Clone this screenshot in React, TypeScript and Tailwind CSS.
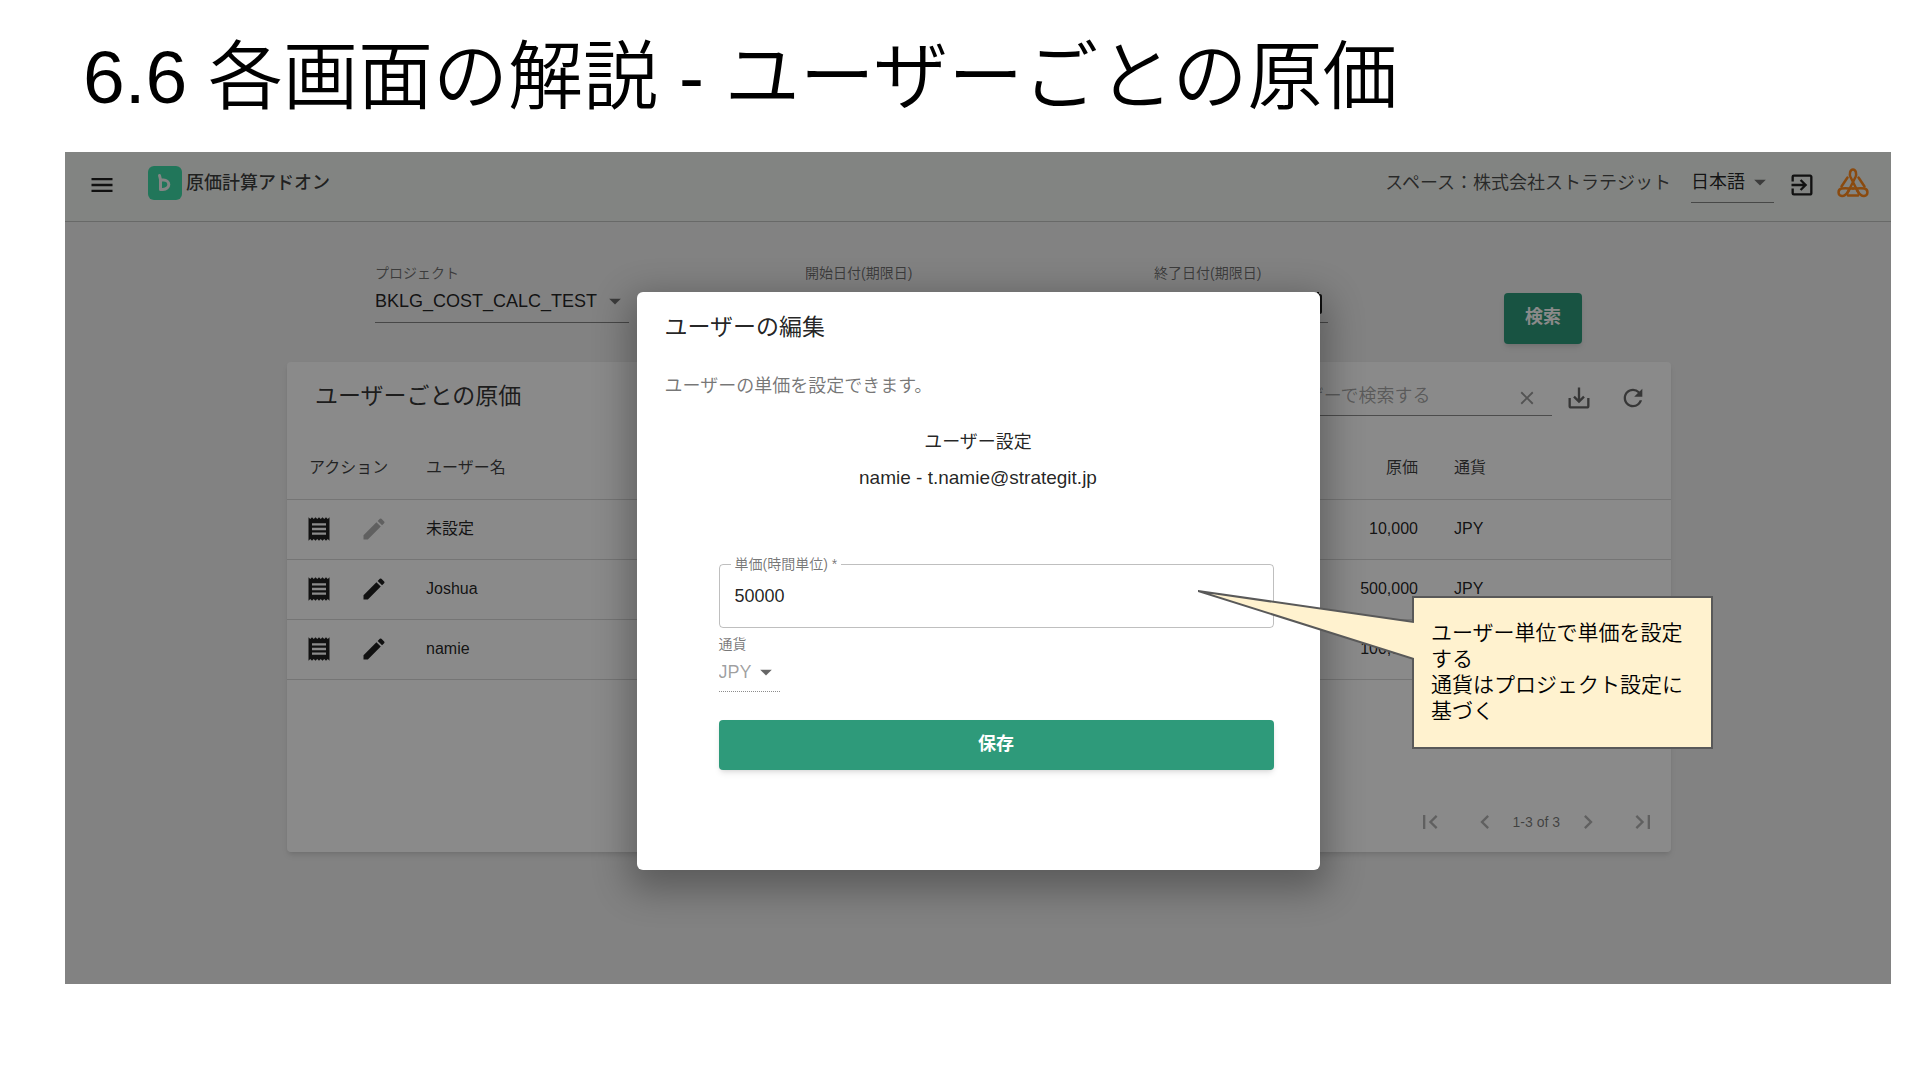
import type { ReactNode } from 'react';
import {
  MdArrowDropDown,
  MdChevronLeft,
  MdChevronRight,
  MdClose,
  MdEdit,
  MdExitToApp,
  MdFirstPage,
  MdLastPage,
  MdMenu,
  MdOutlineCalendarToday,
  MdReceipt,
  MdRefresh,
  MdSaveAlt,
} from 'react-icons/md';

interface UserCost {
  name: string;
  cost: string;
  currency: string;
  editable: boolean;
}

const users: UserCost[] = [
  { name: '未設定', cost: '10,000', currency: 'JPY', editable: false },
  { name: 'Joshua', cost: '500,000', currency: 'JPY', editable: true },
  { name: 'namie', cost: '100,000', currency: 'JPY', editable: true },
];

function BrandLogo() {
  return (
    <svg viewBox="0 0 34 34" className="h-[34px] w-[34px]" aria-hidden="true">
      <rect width="34" height="34" rx="6" fill="#3edba6" />
      <path d="M11.500 9.500L12.500 13.500V23.500H15C18.500 23.500 20.800 21 20.800 18.500S18.500 14 15.500 14H12.500" fill="none" stroke="#f4f4f4" strokeWidth="3" strokeLinecap="round" strokeLinejoin="round" />
    </svg>
  );
}

function TriangleLogo() {
  return (
    <svg viewBox="0 0 32 30" className="h-[30px] w-8" fill="none" stroke="#ff8a1c" strokeWidth="2.500" strokeLinecap="round" aria-hidden="true">
      <path d="M10.500 9.500L4.500 18.500M21.500 9.500L27.500 18.500M11 27.500H21" />
      {/* one looped strand for each corner */}
      <path d="M10 26L18.500 9C19.800 6 19 1.500 16 1.500S12.200 6 13.500 9L22 26" />
      <path d="M16 20.500C12 20.500 8 20 4.500 20.500C0.500 21.500 0.500 27.500 5 28C9 28.300 10 25 12 22" />
      <path d="M16 20.500C20 20.500 24 20 27.500 20.500C31.500 21.500 31.500 27.500 27 28C23 28.300 22 25 20 22" />
    </svg>
  );
}

function Select({ id, value, label, className }: { id: string; value: string; label?: string; className: string }) {
  return (
    <div className={`relative flex items-center border-b border-black/45 ${className}`}>
      <select id={id} aria-label={label} className="w-full appearance-none bg-transparent text-lg leading-7 text-black/87 outline-none">
        <option>{value}</option>
      </select>
      <MdArrowDropDown className="pointer-events-none absolute right-0 h-7 w-7 text-black/54" />
    </div>
  );
}

function DateField({ id, label }: { id: string; label: string }) {
  return (
    <div className="w-[174px]">
      <label htmlFor={id} className="block text-sm leading-5 text-black/54">{label}</label>
      <div className="mt-1 flex h-9 items-center border-b border-black/45 pr-1">
        <input id={id} className="min-w-0 flex-1 bg-transparent text-lg outline-none" />
        <MdOutlineCalendarToday className="mb-1 h-6 w-6 text-black/87" />
      </div>
    </div>
  );
}

function IconButton({ label, disabled, children }: { label: string; disabled?: boolean; children: ReactNode }) {
  return (
    <button type="button" aria-label={label} disabled={disabled} className="flex h-7 w-7 items-center justify-center disabled:text-black/30">
      {children}
    </button>
  );
}

function Header() {
  return (
    <header className="flex h-[70px] items-center border-b border-black/20 bg-[#f1f4f1] pr-[22px] pb-2 pl-[23px]">
      <button type="button" aria-label="メニュー" className="mt-1">
        <MdMenu className="h-7 w-7 text-black/87" />
      </button>
      <div className="ml-8 flex items-center gap-1">
        <BrandLogo />
        <span className="text-lg font-medium text-black/75">原価計算アドオン</span>
      </div>
      <span className="ml-auto text-lg text-black/70">スペース：株式会社ストラテジット</span>
      <Select id="language" label="言語" value="日本語" className="mt-1 ml-5 h-9 w-[83px] pb-1" />
      <button type="button" aria-label="ログアウト" className="mt-1 ml-[14px]">
        <MdExitToApp className="h-7 w-7 text-black/87" />
      </button>
      <div className="ml-[21px]">
        <TriangleLogo />
      </div>
    </header>
  );
}

function Filters() {
  return (
    <div className="flex items-start pt-[41px] pl-[310px]">
      <div className="w-[254px]">
        <label htmlFor="project" className="block text-sm leading-5 text-black/54">プロジェクト</label>
        <Select id="project" value="BKLG_COST_CALC_TEST" className="mt-1 h-9 pb-2" />
      </div>
      <div className="ml-[176px]">
        <DateField id="start-date" label="開始日付(期限日)" />
      </div>
      <div className="ml-[175px]">
        <DateField id="end-date" label="終了日付(期限日)" />
      </div>
      <button type="button" className="mt-[30px] ml-[176px] h-[51px] w-[78px] rounded bg-[#2e9a7a] pb-1 text-lg font-bold text-white shadow-md">
        検索
      </button>
    </div>
  );
}

function CostTable() {
  return (
    <section className="mt-[18px] mr-[220px] ml-[222px] flex h-[490px] flex-col rounded bg-white shadow-md">
      <div className="flex h-[76px] items-center pr-6 pb-1 pl-7">
        <h2 className="pb-1 text-[23px] text-black/80">ユーザーごとの原価</h2>
        <div className="ml-auto flex h-9 w-[282px] items-center border-b border-black/45">
          <input id="user-search" aria-label="ユーザーで検索する" placeholder="ユーザーで検索する" className="min-w-0 flex-1 bg-transparent pb-1 text-lg outline-none placeholder:text-black/35" />
          <button type="button" aria-label="クリア" className="mr-[14px]">
            <MdClose className="h-[22px] w-[22px] text-black/40" />
          </button>
        </div>
        <div className="ml-[13px] flex gap-[26px] text-black/60">
          <IconButton label="ダウンロード"><MdSaveAlt className="h-7 w-7" /></IconButton>
          <IconButton label="更新"><MdRefresh className="h-7 w-7" /></IconButton>
        </div>
      </div>
      <table className="w-full table-fixed text-left text-base text-black/87">
        <thead>
          <tr className="h-[61px] border-b border-black/15 text-black/75">
            <th className="w-[115px] pl-[22px] font-normal">アクション</th>
            <th className="pl-6 font-normal">ユーザー名</th>
            <th className="w-[200px] text-right font-normal">原価</th>
            <th className="w-[253px] pl-9 font-normal">通貨</th>
          </tr>
        </thead>
        <tbody>
          {users.map((user) => (
            <tr key={user.name} className="h-[60px] border-b border-black/15">
              <td className="pl-[18px]">
                <div className="flex gap-[27px]">
                  <IconButton label="詳細"><MdReceipt className="h-7 w-7" /></IconButton>
                  <IconButton label="編集" disabled={!user.editable}><MdEdit className="h-7 w-7" /></IconButton>
                </div>
              </td>
              <td className="pl-6">{user.name}</td>
              <td className="text-right">{user.cost}</td>
              <td className="pl-9">{user.currency}</td>
            </tr>
          ))}
        </tbody>
      </table>
      <nav className="mt-auto flex h-[60px] items-center justify-end pr-[14px] text-black/54" aria-label="ページ">
        <IconButton label="最初" disabled><MdFirstPage className="h-7 w-7" /></IconButton>
        <div className="mx-[27px] flex items-center gap-[14px]">
          <IconButton label="前へ" disabled><MdChevronLeft className="h-7 w-7" /></IconButton>
          <span className="text-sm">1-3 of 3</span>
          <IconButton label="次へ" disabled><MdChevronRight className="h-7 w-7" /></IconButton>
        </div>
        <IconButton label="最後" disabled><MdLastPage className="h-7 w-7" /></IconButton>
      </nav>
    </section>
  );
}

function EditUserDialog() {
  return (
    <div role="dialog" aria-labelledby="dialog-title" className="h-[578px] w-[683px] rounded-md bg-white text-lg text-black/87 shadow-[0_12px_36px_8px_rgba(0,0,0,0.3)]">
      <h2 id="dialog-title" className="px-7 pt-[19px] text-[23px] leading-8">ユーザーの編集</h2>
      <p className="px-7 pt-[29px] leading-7 text-black/54">ユーザーの単価を設定できます。</p>
      <p className="pt-7 text-center leading-7">ユーザー設定</p>
      <p className="pt-2 text-center text-[19px] leading-7">namie - t.namie@strategit.jp</p>
      <form className="mx-[82px] mr-[46px] pt-[62px]">
        <fieldset className="h-[74px] rounded border border-black/25 px-[15px]">
          <legend className="-ml-1 px-1 text-sm leading-5 text-black/54">
            <label htmlFor="unit-price">単価(時間単位) *</label>
          </legend>
          <input id="unit-price" defaultValue="50000" className="block w-full bg-transparent pt-1 leading-9 outline-none" />
        </fieldset>
        <label htmlFor="currency" className="mt-1 block text-sm leading-6 text-black/54">通貨</label>
        <div className="relative flex h-9 w-[61px] items-center border-b border-dotted border-black/45 pb-1">
          <select id="currency" disabled className="w-full appearance-none bg-transparent text-black/38">
            <option>JPY</option>
          </select>
          <MdArrowDropDown className="pointer-events-none absolute right-0 h-7 w-7 text-black/60" />
        </div>
        <button type="button" className="mt-7 h-[50px] w-full rounded bg-[#2e9a7a] pb-0.5 font-bold text-white shadow-md">
          保存
        </button>
      </form>
    </div>
  );
}

function Callout() {
  return (
    <div className="absolute top-[444px] right-[178px] w-[301px]">
      <div className="h-[153px] border-2 border-[#595959] bg-[#fff2cf] px-[17px] pt-[22px] text-[21px] leading-[26px] font-[350] text-black">
        <p>ユーザー単位で単価を設定する</p>
        <p>通貨はプロジェクト設定に基づく</p>
      </div>
      <svg viewBox="0 0 216 72" className="absolute top-[-7px] left-[-214px] h-[72px] w-[216px]" aria-hidden="true">
        <path d="M216 33L0 2L216 70" fill="#fff2cf" stroke="#595959" strokeWidth="2" />
      </svg>
    </div>
  );
}

export default function App() {
  return (
    <main className="min-h-screen bg-white pr-[29px] pl-[65px] font-['Liberation_Sans','Noto_Sans_CJK_JP',sans-serif]">
      <h1 className="pt-[22px] pb-5 pl-[18px] text-[75px] leading-[110px] font-[350] text-black">
        6.6 各画面の解説 - ユーザーごとの原価
      </h1>
      <div className="relative h-[832px] bg-[#f0f0f0]">
        <Header />
        <Filters />
        <CostTable />
        <div className="absolute inset-0 flex items-start justify-center bg-black/46 pt-[140px]">
          <EditUserDialog />
        </div>
        <Callout />
      </div>
    </main>
  );
}
